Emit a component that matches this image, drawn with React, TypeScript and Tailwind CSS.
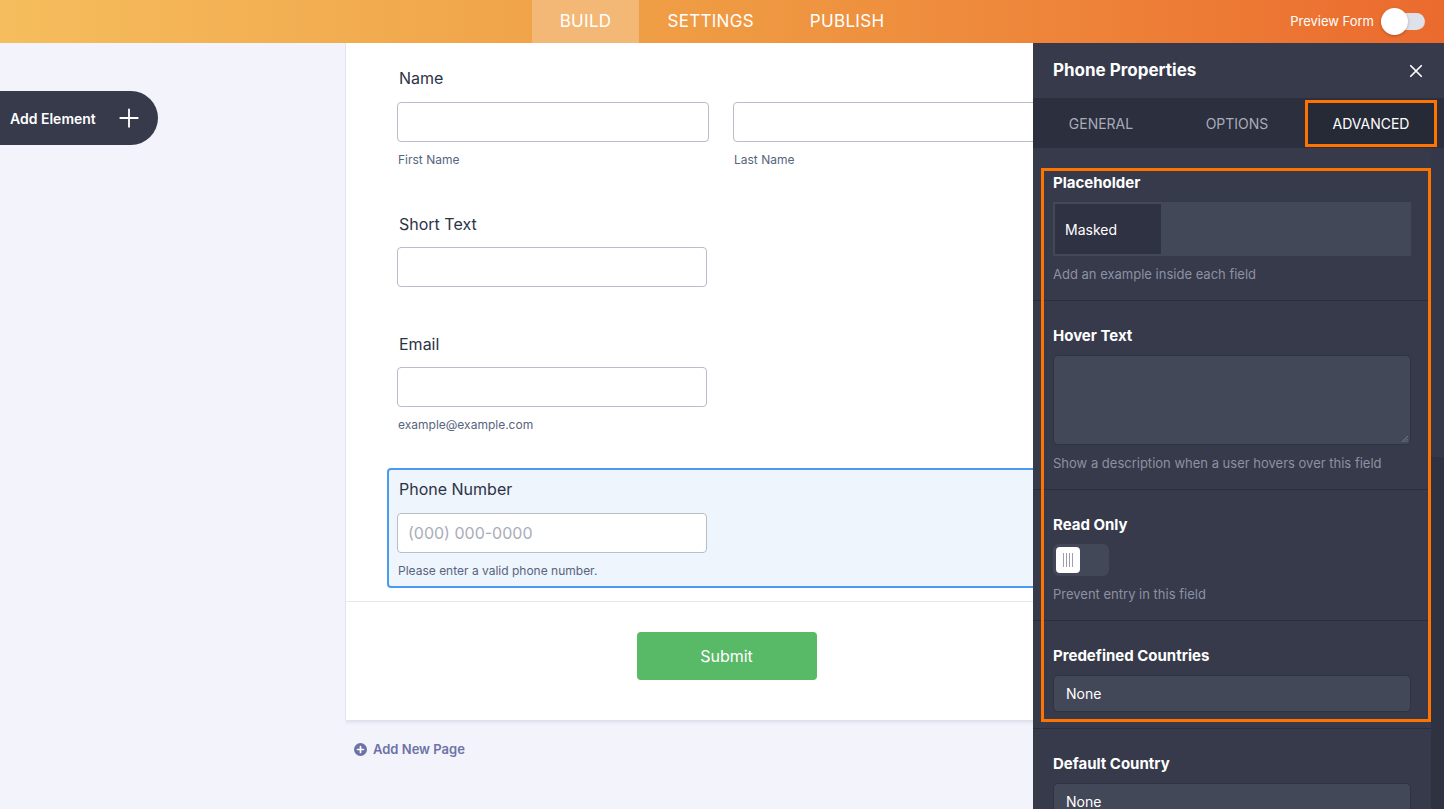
import React from "react";

function PlusIcon({ className = "" }: { className?: string }) {
  return (
    <svg viewBox="0 0 24 24" className={className} fill="none" stroke="currentColor" strokeWidth="2" strokeLinecap="round">
      <path d="M12 2.5v19M2.5 12h19" />
    </svg>
  );
}

function CloseIcon() {
  return (
    <svg viewBox="0 0 16 16" className="w-[14px] h-[14px] text-white" fill="none" stroke="currentColor" strokeWidth="2" strokeLinecap="round">
      <path d="M2 2l12 12M14 2L2 14" />
    </svg>
  );
}

function TextField({ className = "", placeholder }: { className?: string; placeholder?: string }) {
  return (
    <div className={`h-[40px] rounded-[4px] border border-[#b9bdc9] bg-white flex items-center px-[10px] text-[16px] text-[#a9adb9] ${className}`}>
      {placeholder}
    </div>
  );
}

function Field({
  label,
  active = false,
  tight = false,
  children,
}: {
  label: string;
  active?: boolean;
  tight?: boolean;
  children: React.ReactNode;
}) {
  return (
    <div
      className={`ml-[41px] rounded-[4px] border-2 pl-[8px] pr-[8px] pt-[9px] ${tight ? "pb-[6px]" : "pb-[7px]"} ${
        active ? "border-[#4a9af0] bg-[#eef5fd]" : "border-transparent"
      }`}
    >
      <div className="text-[16px] leading-[20px] text-[#2c3345] pl-[2px]">{label}</div>
      {children}
    </div>
  );
}

function SubLabel({ children, className = "" }: { children: React.ReactNode; className?: string }) {
  return <div className={`text-[12px] leading-[16px] text-[#57647e] pl-[1px] ${className}`}>{children}</div>;
}

function PanelSection({
  label,
  help,
  children,
  last = false,
}: {
  label: string;
  help?: string;
  children: React.ReactNode;
  last?: boolean;
}) {
  return (
    <div className={`px-[20px] pt-[26px] ${help ? "pb-[17px]" : "pb-[16px]"} ${last ? "" : "border-b border-[#2b2e3b]"}`}>
      <div className="text-[15px] leading-[18px] font-bold text-white">{label}</div>
      <div className="mt-[10px]">{children}</div>
      {help && <div className="mt-[9px] text-[13px] leading-[18px] text-[#8d91a2]">{help}</div>}
    </div>
  );
}

function SelectBox({ value }: { value: string }) {
  return (
    <div className="h-[37px] rounded-[5px] border border-[#2f3240] bg-[#434859] flex items-center px-[12px] text-[14px] text-white">
      {value}
    </div>
  );
}

export default function App() {
  return (
    <div className="w-[1444px] h-[809px] overflow-hidden flex flex-col bg-[#f3f3fc] font-[Inter,sans-serif]">
      {/* top bar */}
      <header className="h-[43px] shrink-0 grid grid-cols-[1fr_auto_1fr] bg-linear-to-r from-[#f5bd5d] via-[#ef9a43] to-[#eb6a2e]">
        <div />
        <nav className="flex h-full">
          <div className="px-[28px] flex items-center bg-[#f4b876] text-white text-[17px] tracking-[0.3px]">BUILD</div>
          <div className="px-[28px] flex items-center text-white text-[17px] tracking-[0.3px]">SETTINGS</div>
          <div className="px-[28px] flex items-center text-white text-[17px] tracking-[0.3px]">PUBLISH</div>
        </nav>
        <div className="flex items-center justify-end pr-[19px] gap-[7px]">
          <span className="text-[13px] text-white">Preview Form</span>
          <div className="relative w-[44px] h-[17px] rounded-full bg-[#dfe1e8]">
            <div className="absolute left-0 top-[-5px] w-[27px] h-[27px] rounded-full bg-white shadow-[0_1px_3px_rgba(0,0,0,0.25)]" />
          </div>
        </div>
      </header>

      <div className="flex flex-1 min-h-0">
        {/* left column */}
        <aside className="w-[345px] shrink-0 pt-[48px]">
          <div className="w-[158px] h-[54px] rounded-r-full bg-[#363a4b] flex items-center justify-between pl-[10px] pr-[18px]">
            <span className="text-[14px] font-semibold text-white">Add Element</span>
            <PlusIcon className="w-[22px] h-[22px] text-white" />
          </div>
        </aside>

        {/* form canvas */}
        <main className="flex-1 min-w-0 overflow-hidden">
          <div className="w-[762px] h-[677px] bg-white border-l border-[#e3e4ef] shadow-[0_2px_4px_rgba(40,44,80,0.12)] flex flex-col">
            <div className="pt-[14px] flex flex-col gap-[27px]">
              <Field label="Name" tight>
                <div className="mt-[14px] flex gap-[24px]">
                  <div className="w-[312px]">
                    <TextField />
                    <SubLabel className="mt-[10px]">First Name</SubLabel>
                  </div>
                  <div className="w-[312px]">
                    <TextField />
                    <SubLabel className="mt-[10px]">Last Name</SubLabel>
                  </div>
                </div>
              </Field>
              <Field label="Short Text">
                <TextField className="mt-[13px] w-[310px]" />
              </Field>
              <Field label="Email" tight>
                <TextField className="mt-[13px] w-[310px]" />
                <SubLabel className="mt-[10px]">example@example.com</SubLabel>
              </Field>
              <Field label="Phone Number" active>
                <TextField className="mt-[14px] w-[310px]" placeholder="(000) 000-0000" />
                <SubLabel className="mt-[10px]">Please enter a valid phone number.</SubLabel>
              </Field>
            </div>
            <div className="mt-[13px] border-t border-[#e6e7ef] pt-[30px] flex justify-center">
              <div className="w-[180px] h-[48px] rounded-[4px] bg-[#58b967] flex items-center justify-center text-[16px] text-white">
                Submit
              </div>
            </div>
          </div>
          <div className="mt-[20px] ml-[9px] flex items-center gap-[6px] text-[13px] font-semibold text-[#6c72a6]">
            <svg viewBox="0 0 14 14" className="w-[13px] h-[13px]">
              <circle cx="7" cy="7" r="7" fill="#6c72a6" />
              <path d="M7 3.8v6.4M3.8 7h6.4" stroke="#fff" strokeWidth="1.8" strokeLinecap="round" />
            </svg>
            <span>Add New Page</span>
          </div>
        </main>

        {/* properties panel */}
        <section className="w-[411px] shrink-0 bg-[#363a4b] flex flex-col">
          <div className="h-[55px] shrink-0 flex items-center justify-between pl-[20px] pr-[21px]">
            <span className="text-[17px] font-bold text-white">Phone Properties</span>
            <CloseIcon />
          </div>
          <div className="h-[50px] shrink-0 bg-[#2c2f3d] flex">
            <div className="w-[136px] flex items-center justify-center text-[14px] text-[#a8acba]">GENERAL</div>
            <div className="w-[136px] flex items-center justify-center text-[14px] text-[#a8acba]">OPTIONS</div>
            <div className="w-[132px] mt-[2px] mb-[1px] border-[3px] border-[#ff7300] bg-[#262a37] flex items-center justify-center text-[14px] text-white">
              ADVANCED
            </div>
          </div>
          <div className="flex-1 min-h-0 flex">
            <div className="w-[398px] relative">
              <PanelSection label="Placeholder" help="Add an example inside each field">
                <div className="h-[54px] bg-[#434859] p-[2px] flex">
                  <div className="w-[106px] bg-[#2f3242] flex items-center pl-[10px] text-[14px] text-white">Masked</div>
                </div>
              </PanelSection>
              <PanelSection label="Hover Text" help="Show a description when a user hovers over this field">
                <div className="relative h-[90px] rounded-[5px] border border-[#2f3240] bg-[#434859]">
                  <svg viewBox="0 0 8 8" className="absolute right-[2px] bottom-[2px] w-[7px] h-[7px]" stroke="#8d91a2" strokeWidth="0.8">
                    <path d="M8 1L1 8M8 4L4 8M8 7L7 8" />
                  </svg>
                </div>
              </PanelSection>
              <PanelSection label="Read Only" help="Prevent entry in this field">
                <div className="w-[56px] h-[32px] rounded-[6px] bg-[#434859] p-[3px]">
                  <div className="w-[24px] h-[26px] rounded-[4px] bg-white flex items-center justify-center gap-[2px]">
                    <span className="w-px h-[14px] bg-[#9a9eae]" />
                    <span className="w-px h-[14px] bg-[#9a9eae]" />
                    <span className="w-px h-[14px] bg-[#9a9eae]" />
                    <span className="w-px h-[14px] bg-[#9a9eae]" />
                  </div>
                </div>
              </PanelSection>
              <PanelSection label="Predefined Countries">
                <SelectBox value="None" />
              </PanelSection>
              <PanelSection label="Default Country" last>
                <SelectBox value="None" />
              </PanelSection>
              {/* highlighted group */}
              <div className="absolute left-[8px] top-[20px] w-[390px] h-[554px] border-[3px] border-[#ff7300] pointer-events-none" />
            </div>
            <div className="flex-1 bg-[#2f3241] flex flex-col">
              <div className="h-[309px] bg-[#343848]" />
            </div>
          </div>
        </section>
      </div>
    </div>
  );
}
